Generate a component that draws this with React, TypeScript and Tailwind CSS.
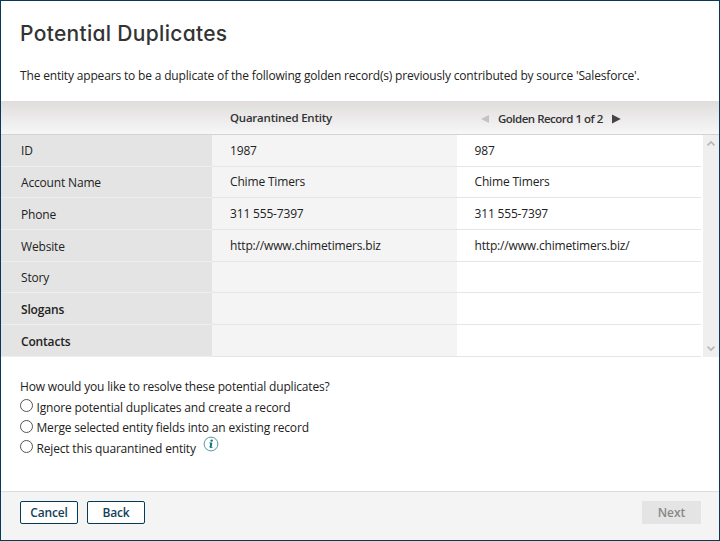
const rows = [
  { label: 'ID', a: '1987', b: '987', h: 'h-[32px]', lp: 'pt-[7px]', vp: 'pt-[7px]' },
  { label: 'Account Name', a: 'Chime Timers', b: 'Chime Timers', h: 'h-[31px]', lp: 'pt-[7px]', vp: 'pt-[6px]' },
  { label: 'Phone', a: '311 555-7397', b: '311 555-7397', h: 'h-[32px]', lp: 'pt-[8px]', vp: 'pt-[7px]' },
  { label: 'Website', a: 'http://www.chimetimers.biz', b: 'http://www.chimetimers.biz/', h: 'h-[32px]', lp: 'pt-[8px]', vp: 'pt-[7px]' },
  { label: 'Story', a: '', b: '', h: 'h-[31px]', lp: 'pt-[7px]', vp: 'pt-[7px]' },
  { label: 'Slogans', a: '', b: '', h: 'h-[32px]', lp: 'pt-[8px]', vp: 'pt-[7px]', bold: true },
  { label: 'Contacts', a: '', b: '', h: 'h-[32px]', lp: 'pt-[8px]', vp: 'pt-[7px]', bold: true },
];

const options = [
  { text: 'Ignore potential duplicates and create a record', h: 'h-[20px]', dot: 'mt-0' },
  { text: 'Merge selected entity fields into an existing record', h: 'h-[21px]', dot: 'mt-[1px]' },
  { text: 'Reject this quarantined entity', h: 'h-[20px]', dot: 'mt-0', info: true },
];

function InfoIcon() {
  return (
    <svg width="16" height="16" viewBox="0 0 16 16" className="-mt-[4px] ml-[7px] shrink-0">
      <circle cx="8" cy="8" r="6.9" fill="#fff" stroke="#3b8f99" strokeWidth="0.9" />
      <circle cx="8.7" cy="4.6" r="1.2" fill="#11717f" />
      <path d="M6.3 6.9h1.6L7 11.3h2.6" fill="none" stroke="#11717f" strokeWidth="0.9" />
      <path d="M8.5 6.6 7.6 11.6" fill="none" stroke="#11717f" strokeWidth="1.7" />
    </svg>
  );
}

export default function App() {
  return (
    <div className="flex h-[541px] w-[720px] flex-col overflow-hidden border border-[#063b57] bg-white font-['Open_Sans','Noto_Sans',sans-serif] text-[12px] leading-[17px] tracking-[-0.17px] whitespace-nowrap text-[#222]">
      <header className="h-[100px] shrink-0 pl-[19px]">
        <h1 className="pt-[18px] font-['Inter',sans-serif] text-[21px] leading-[30px] font-medium tracking-[0.31px] text-[#333] [font-feature-settings:'cv11']">
          Potential Duplicates
        </h1>
        <p className="mt-[18px]">
          The entity appears to be a duplicate of the following golden record(s) previously contributed by source 'Salesforce'.
        </p>
      </header>

      <div className="flex h-[34px] shrink-0 border-b border-[#d3d3d3] bg-linear-to-b from-[#e0dcdc] to-[#f7f7f7] text-[11.5px] font-semibold text-[#333]">
        <div className="w-[211px]" />
        <div className="w-[245px] pt-[8px] pl-[18px] tracking-[-0.22px]">Quarantined Entity</div>
        <div className="flex h-[35px] items-center pl-[24px]">
          <svg width="8" height="10" viewBox="0 0 8 10"><path d="M8 1v8L0 5z" fill="#c4c2c2" /></svg>
          <span className="ml-[9px] w-[114px] tracking-[-0.5px]">Golden Record 1 of 2</span>
          <svg width="9" height="10" viewBox="0 0 9 10"><path d="M0 .5v9L8.8 5z" fill="#444" /></svg>
        </div>
      </div>

      <div className="flex h-[222px] shrink-0">
        <div className="w-[700px]">
          {rows.map((r) => (
            <div key={r.label} className={`flex ${r.h}`}>
              <div className={`w-[211px] border-b border-[#eeeeee] bg-[#e4e4e4] pl-[20px] ${r.lp} ${r.bold ? 'font-semibold' : ''}`}>{r.label}</div>
              <div className={`w-[245px] border-b border-[#e6e6e6] bg-[#f4f4f4] pl-[18px] ${r.vp}`}>{r.a}</div>
              <div className={`w-[244px] border-b border-[#e6e6e6] pl-[17.5px] ${r.vp}`}>{r.b}</div>
            </div>
          ))}
        </div>
        <div className="ml-[2px] flex w-[16px] flex-col items-center justify-between bg-[#efefef] py-[5px]">
          <svg width="8" height="7" viewBox="0 0 8 7"><path d="M.6 5.4 4 2l3.4 3.4" fill="none" stroke="#b8b8b8" strokeWidth="1.7" /></svg>
          <svg width="8" height="7" viewBox="0 0 8 7"><path d="M.6 1.6 4 5l3.4-3.4" fill="none" stroke="#b8b8b8" strokeWidth="1.7" /></svg>
        </div>
      </div>

      <section className="grow pt-[21px] pl-[19px]">
        <p>How would you like to resolve these potential duplicates?</p>
        <div className="mt-[4px] flex flex-col">
          {options.map((o) => (
            <div key={o.text} className={`flex items-start ${o.h}`}>
              <span className={`mr-[3.5px] block size-[13px] shrink-0 rounded-full border border-[#555] bg-white ${o.dot}`} />
              <span>{o.text}</span>
              {o.info && <InfoIcon />}
            </div>
          ))}
        </div>
      </section>

      <footer className="flex h-[49px] shrink-0 items-start border-t border-[#dcdcdc] bg-[#f4f4f4] pt-[9px] pr-[18px] pl-[19px] font-semibold">
        <button className="h-[23px] w-[58px] rounded-[2px] border border-[#063b57] bg-white text-[#123f5b]">Cancel</button>
        <button className="ml-[9px] h-[23px] w-[58px] rounded-[2px] border border-[#063b57] bg-white text-[#123f5b]">Back</button>
        <button className="ml-auto h-[23px] w-[59px] bg-[#e4e4e4] tracking-normal text-[#888]">Next</button>
      </footer>
    </div>
  );
}
